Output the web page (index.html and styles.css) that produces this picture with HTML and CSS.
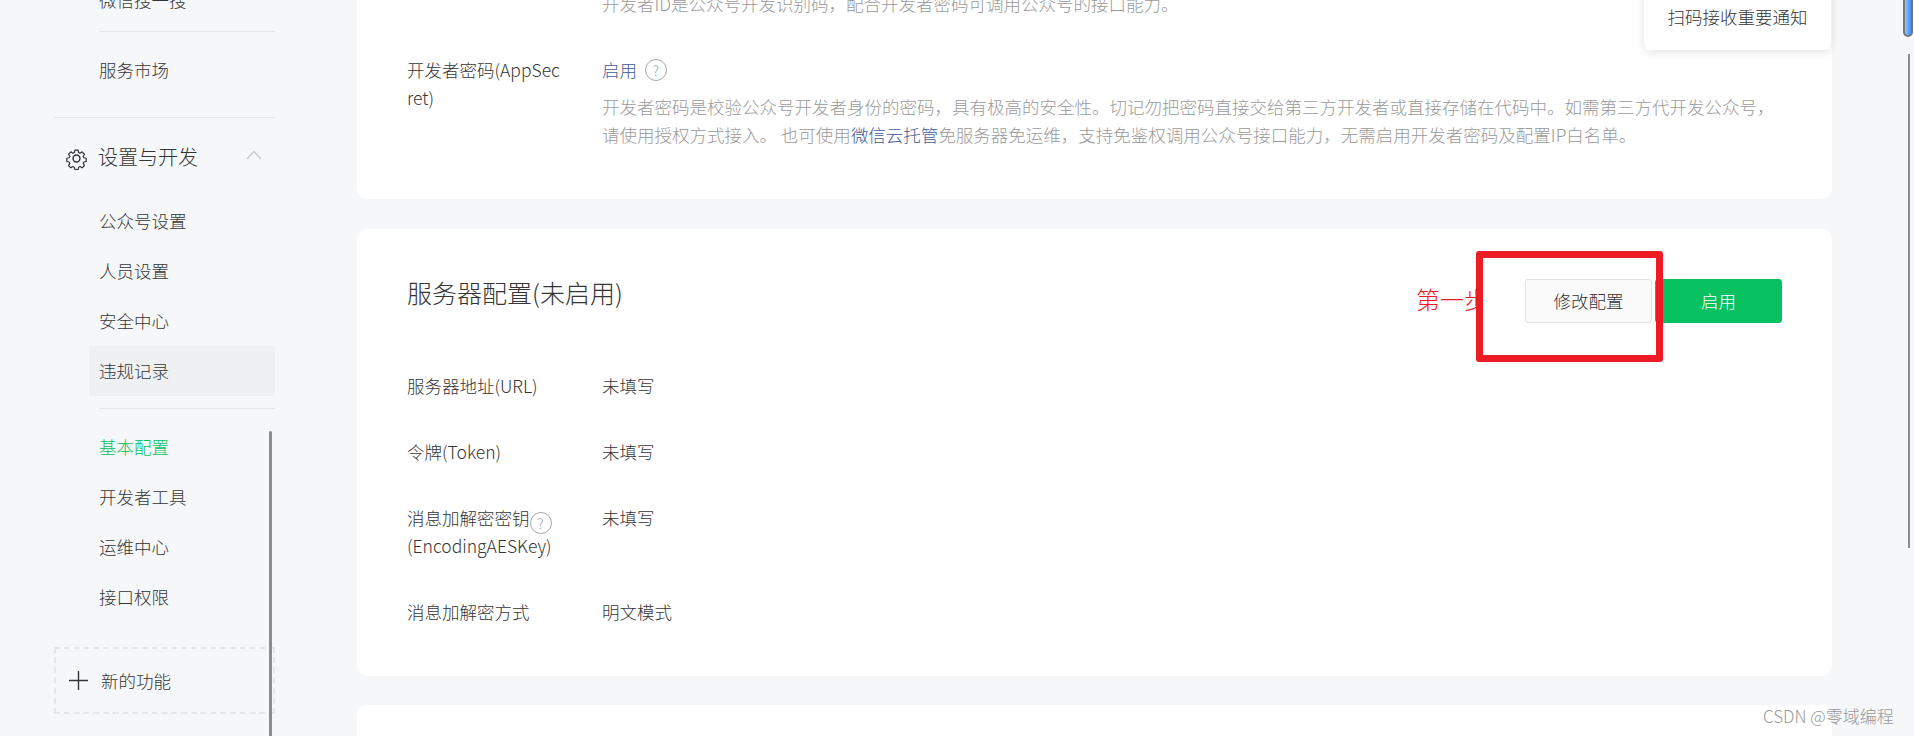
FILE: index.html
```html
<!doctype html>
<html>
<head>
<meta charset="UTF-8">
<title>基本配置</title>
<link rel="stylesheet" href="styles.css">
</head>
<body>
<div class="page">
	<div class="side">
		<div class="side-group top">
			<a class="side-link">微信搜一搜</a>
		</div>
		<div class="side-group market">
			<a class="side-link">服务市场</a>
		</div>
		<div class="side-head">
			<svg class="gear" viewBox="0 0 24 24" width="23" height="23" fill="none" stroke="#353535" stroke-width="1.5" stroke-linejoin="round">
				<path d="M10 2h4l.6 2.9 1.8.8 2.5-1.6 2.9 2.9-1.6 2.5.8 1.8 2.9.6v4l-2.9.6-.8 1.8 1.6 2.5-2.9 2.9-2.5-1.6-1.8.8-.6 2.9h-4l-.6-2.9-1.8-.8-2.5 1.6-2.9-2.9 1.6-2.5-.8-1.8-2.9-.6v-4l2.9-.6.8-1.8-1.6-2.5 2.9-2.9 2.5 1.6 1.8-.8z" transform="translate(1.8 1.6) scale(.85)"/>
				<circle cx="12" cy="12" r="3.6"/>
			</svg>
			<span class="side-title">设置与开发</span>
			<svg class="arrow" viewBox="0 0 16 10" width="16" height="10" fill="none" stroke="#c4c7cc" stroke-width="1.2"><path d="M1 9l7-7.5L15 9"/></svg>
		</div>
		<div class="side-group setting">
			<a class="side-link">公众号设置</a>
			<a class="side-link">人员设置</a>
			<a class="side-link">安全中心</a>
			<a class="side-link hover">违规记录</a>
		</div>
		<div class="side-group tools">
			<a class="side-link on">基本配置</a>
			<a class="side-link">开发者工具</a>
			<a class="side-link">运维中心</a>
			<a class="side-link">接口权限</a>
		</div>
		<div class="side-new">
			<svg viewBox="0 0 19 19" width="19" height="19" stroke="#353535" stroke-width="1.4"><path d="M0 9.5h19M9.5 0v19"/></svg>
			<span>新的功能</span>
		</div>
		<span class="side-bar"></span>
	</div>
	<div class="main">
		<div class="card first">
			<div class="row">
				<div class="label"></div>
				<div class="value"><p class="desc">开发者ID是公众号开发识别码，配合开发者密码可调用公众号的接口能力。</p></div>
			</div>
			<div class="row">
				<div class="label">开发者密码(AppSecret)</div>
				<div class="value">
					<div class="value-line"><a class="link">启用</a><span class="help big">?</span></div>
					<p class="desc">开发者密码是校验公众号开发者身份的密码，具有极高的安全性。切记勿把密码直接交给第三方开发者或直接存储在代码中。如需第三方代开发公众号，<br>请使用授权方式接入。 也可使用<a class="link">微信云托管</a>免服务器免运维，支持免鉴权调用公众号接口能力，无需启用开发者密码及配置IP白名单。</p>
				</div>
			</div>
		</div>
		<div class="card server">
			<div class="card-head">
				<h3>服务器配置(未启用)</h3>
				<div class="ops">
					<span class="step">第一步</span>
					<a class="btn">修改配置</a>
					<a class="btn green">启用</a>
					<span class="mark"></span>
				</div>
			</div>
			<div class="row">
				<div class="label">服务器地址(URL)</div>
				<div class="value">未填写</div>
			</div>
			<div class="row">
				<div class="label">令牌(Token)</div>
				<div class="value">未填写</div>
			</div>
			<div class="row">
				<div class="label">消息加解密密钥<span class="help">?</span> (EncodingAESKey)</div>
				<div class="value">未填写</div>
			</div>
			<div class="row">
				<div class="label">消息加解密方式</div>
				<div class="value">明文模式</div>
			</div>
		</div>
		<div class="card last"></div>
	</div>
	<div class="scroll"><span class="thumb"></span><span class="track"></span></div>
</div>
<div class="notice">扫码接收重要通知</div>
<div class="water">CSDN @零域编程</div>
</body>
</html>
```

FILE: styles.css
```css
*{margin:0;padding:0;box-sizing:border-box;}
html,body{height:100%;overflow:hidden;}
body{background:#f6f7f9;color:#353535;font:300 17.5px/28px "Noto Sans CJK SC","Liberation Sans",sans-serif;position:relative;}
a{text-decoration:none;color:inherit;}
.page{display:flex;height:900px;}

.side{width:357px;flex:none;padding:0 82px 0 54px;position:relative;margin-top:-25px;}
.side-group{margin-left:45px;}
.side-link{display:block;height:50px;padding:11px 0 11px 10px;margin-left:-10px;}
.top{height:57px;border-bottom:1px solid #e4e6ea;}
.market{margin-left:0;padding:13px 0 22px 45px;height:86px;border-bottom:1px solid #e4e6ea;}
.side-head{display:flex;align-items:center;height:80px;padding-left:11px;font-size:20px;}
.gear{margin-right:10px;}
.side-title{flex:1;margin-top:-2px;}
.arrow{margin:-6px 13px 0 0;}
.setting{margin-top:-2px;padding-bottom:12px;border-bottom:1px solid #e4e6ea;}
.hover{background:#eff0f2;}
.tools{padding-top:13px;}
.on{color:#07c160;}
.side-new{height:67px;margin-top:25px;border:2px dashed #e4e6ea;display:flex;align-items:center;padding-left:13px;gap:13px;}
.side-bar{position:absolute;left:269px;top:456px;width:3px;height:420px;background:#8c8c8c;border-radius:2px 2px 0 0;}

.main{width:1475px;flex:none;margin-top:-60px;}
.card{background:#fff;border-radius:10px;padding:0 50px;margin-bottom:29px;}
.first{height:259px;padding-top:50px;margin-bottom:30px;}
.row{display:flex;margin-bottom:38px;}
.label{width:195px;padding-right:38px;word-break:break-all;flex:none;}
.value{flex:1;}
.desc{color:#9a9a9a;}
.value-line{margin-bottom:9px;display:flex;align-items:center;}
.link{color:#3f5a99;}
.help{display:inline-flex;width:22px;height:22px;margin:-4px 0;border:1.5px solid #a8a8a8;border-radius:50%;color:#a0a0a0;font-size:14px;line-height:1;align-items:center;justify-content:center;vertical-align:-4px;}
.help.big{margin-left:8px;}
.server{height:447px;padding-top:44px;}
.card-head{display:flex;justify-content:space-between;align-items:center;height:40px;margin-bottom:59px;}
.card-head h3{font-size:25px;font-weight:300;line-height:40px;margin-top:-2px;}
.ops{display:flex;align-items:center;position:relative;margin:8px 0 -8px;}
.step{color:#ed1c24;font-size:24px;line-height:44px;width:62px;overflow:hidden;white-space:nowrap;margin:-4px 47px 0 0;}
.btn{display:block;width:127px;height:44px;line-height:42px;text-align:center;background:#fafafa;border:1px solid #e3e3e3;border-radius:3px;}
.green{background:#07c160;border-color:#07c160;color:#fff;margin-left:3px;}
.mark{position:absolute;left:60px;top:-28px;width:187px;height:111px;border:7px solid #ed1c24;border-radius:3px;}
.last{height:120px;}

.scroll{position:absolute;right:0;top:0;width:14px;height:736px;}
.thumb{position:absolute;left:3px;top:-10px;width:10px;height:47px;background:linear-gradient(90deg,#8fc4ff,#3f8ef5);border:2px solid #777;border-radius:5px;}
.track{position:absolute;left:8px;top:54px;width:2px;height:494px;background:#8c8c8c;}

.notice{position:absolute;left:1644px;top:-10px;width:187px;height:60px;padding-top:13px;text-align:center;background:#fff;border-radius:0 0 6px 6px;box-shadow:0 2px 10px rgba(0,0,0,.12);}
.water{position:absolute;left:1763px;top:704px;font-size:17px;line-height:24px;color:#999;}
```
